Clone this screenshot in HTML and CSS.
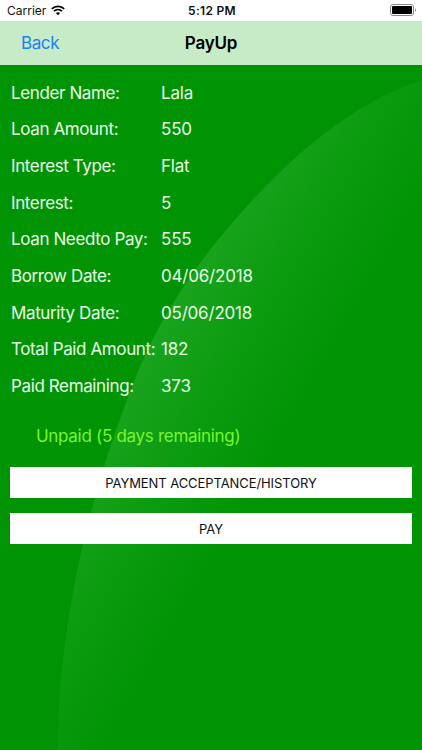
FILE: index.html
```
<!DOCTYPE html>
<html lang="en">
<head>
  <meta charset="UTF-8">
  <meta name="viewport" content="width=device-width, initial-scale=1.0">
  <title>PayUp</title>
  <link rel="stylesheet" href="styles.css">
</head>
<body>
  <div class="status-bar">
    <div class="carrier">
      <span class="carrier-name">Carrier</span>
      <svg class="wifi" width="14" height="11" viewBox="0 0 14 11">
        <path d="M0.8 3.9C4.3 0.5 9.7 0.5 13.2 3.9" fill="none" stroke="#000" stroke-width="1.8"/>
        <path d="M3 6.2C5.3 4.1 8.7 4.1 11 6.2" fill="none" stroke="#000" stroke-width="1.8"/>
        <path d="M4.9 8.1C6.1 7.1 7.9 7.1 9.1 8.1L7 10.3Z"/>
      </svg>
    </div>
    <span class="time">5:12 PM</span>
    <svg class="battery" width="27" height="12" viewBox="0 0 27 12">
      <rect x="0.5" y="0.5" width="23" height="11" rx="2.5" fill="#fff" stroke="#8a8a8a"/>
      <rect x="2" y="2" width="20" height="8" rx="1"/>
      <path d="M25 4.2C26.4 4.8 26.4 7.2 25 7.8Z" fill="#8a8a8a"/>
    </svg>
  </div>

  <div class="nav-bar">
    <a class="back">Back</a>
    <h1>PayUp</h1>
  </div>

  <div class="content">
    <svg class="backdrop" width="422" height="685" viewBox="0 65 422 685">
      <defs>
        <linearGradient id="shine" gradientUnits="userSpaceOnUse" x1="165" y1="320" x2="308" y2="402">
          <stop offset="0" stop-color="#1aa31e"/>
          <stop offset="0.45" stop-color="#0c9c10"/>
          <stop offset="1" stop-color="#009404"/>
        </linearGradient>
      </defs>
      <path d="M422 80C354 102 287 157 222 235C168 301 144 353 127 400C82 520 58 640 58 750H422Z" fill="url(#shine)"/>
    </svg>

    <dl class="details">
      <dt>Lender Name:</dt><dd>Lala</dd>
      <dt>Loan Amount:</dt><dd>550</dd>
      <dt>Interest Type:</dt><dd>Flat</dd>
      <dt>Interest:</dt><dd>5</dd>
      <dt>Loan Needto Pay:</dt><dd>555</dd>
      <dt>Borrow Date:</dt><dd>04/06/2018</dd>
      <dt>Maturity Date:</dt><dd>05/06/2018</dd>
      <dt>Total Paid Amount:</dt><dd>182</dd>
      <dt>Paid Remaining:</dt><dd>373</dd>
    </dl>

    <p class="status">Unpaid (5 days remaining)</p>

    <div class="actions">
      <button class="button">PAYMENT ACCEPTANCE/HISTORY</button>
      <button class="button">PAY</button>
    </div>
  </div>
</body>
</html>
```
FILE: styles.css
```
* {
  box-sizing: border-box;
}

body {
  margin: 0;
  height: 750px;
  display: flex;
  flex-direction: column;
  overflow: hidden;
  font-family: Inter, "Liberation Sans", sans-serif;
  background: #009404;
}

.status-bar {
  height: 21px;
  padding: 0 5px 0 7px;
  display: grid;
  grid-template-columns: 1fr auto 1fr;
  align-items: center;
  background: #fff;
  color: #111;
  font-size: 12px;
}

.carrier {
  display: flex;
  align-items: center;
  gap: 5px;
}

.time {
  font-weight: 600;
  letter-spacing: 0.3px;
}

.battery {
  justify-self: end;
  margin-top: -1px;
}

.nav-bar {
  height: 44px;
  padding: 0 21px;
  display: grid;
  grid-template-columns: 1fr auto 1fr;
  align-items: center;
  background: #c7eac7;
}

.back {
  color: #1a82f7;
  font-size: 17px;
  letter-spacing: -0.4px;
}

.nav-bar h1 {
  margin: 0;
  font-size: 17px;
  font-weight: 600;
  letter-spacing: -0.2px;
  color: #000;
}

.content {
  position: relative;
  flex: 1;
  padding: 9.5px 10px 0 11px;
}

/* curved highlight behind the form */
.backdrop {
  position: absolute;
  top: 0;
  left: 0;
  z-index: -1;
}

.details {
  margin: 0;
  display: grid;
  grid-template-columns: 150px 1fr;
  grid-auto-rows: 36.67px;
  align-items: center;
  color: #e9fbe6;
  font-size: 17px;
  letter-spacing: -0.38px;
  white-space: nowrap;
}

.details dd {
  margin: 0;
  letter-spacing: -0.2px;
}

.status {
  margin: 20.5px 0 0 25px;
  color: #7cf52a;
  font-size: 17px;
  letter-spacing: -0.3px;
  line-height: 22px;
}

.actions {
  margin: 20px 0 0 -1px;
  display: flex;
  flex-direction: column;
  gap: 15px;
}

.button {
  height: 31px;
  padding: 1px 0 0;
  border: none;
  background: #fff;
  color: #111;
  font-family: inherit;
  font-size: 13px;
  letter-spacing: -0.08px;
}
```
